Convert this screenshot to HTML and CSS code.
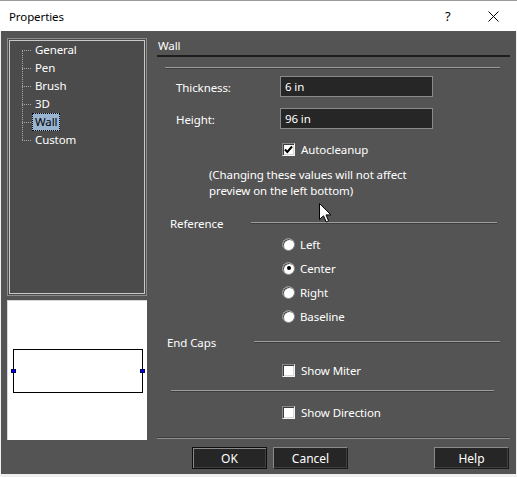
FILE: index.html
```html
<!DOCTYPE html>
<html lang="en">
<head>
    <meta charset="UTF-8">
    <meta name="viewport" content="width=device-width, initial-scale=1.0">
    <title>Properties</title>
    <link rel="stylesheet" href="styles.css">
</head>
<body>
<div class="window">
    <!-- Title bar -->
    <div class="titlebar">
        <span class="title">Properties</span>
        <span class="title-help">?</span>
        <span class="title-close">
            <svg width="11" height="11" viewBox="0 0 11 11"><path d="M0.5 0.5L10.5 10.5M10.5 0.5L0.5 10.5" stroke="#000" stroke-width="1" fill="none"/></svg>
        </span>
    </div>

    <div class="dialog">
        <!-- Left: page tree + preview -->
        <aside class="side">
            <div class="tree-box">
                <ul class="tree">
                    <li><span>General</span></li>
                    <li><span>Pen</span></li>
                    <li><span>Brush</span></li>
                    <li><span>3D</span></li>
                    <li><span class="selected">Wall</span></li>
                    <li><span>Custom</span></li>
                </ul>
            </div>
            <div class="preview">
                <div class="wall-shape">
                    <span class="handle handle-left"></span>
                    <span class="handle handle-right"></span>
                </div>
            </div>
        </aside>

        <!-- Right: Wall page -->
        <main class="page">
            <div class="page-title">Wall</div>
            <div class="groove top-groove"></div>

            <div class="field-row first">
                <label class="field-label">Thickness:</label>
                <div class="field">6 in</div>
            </div>
            <div class="field-row">
                <label class="field-label">Height:</label>
                <div class="field">96 in</div>
            </div>

            <div class="check-row autocleanup">
                <span class="checkbox checked">
                    <svg width="9" height="9" viewBox="0 0 9 9"><path d="M1 4.5L3.3 7L8 1.5" stroke="#000" stroke-width="2" fill="none"/></svg>
                </span>
                <span>Autocleanup</span>
            </div>

            <p class="note">(Changing these values will not affect<br>preview on the left bottom)</p>

            <div class="group-head reference">
                <span class="group-label">Reference</span>
                <span class="groove"></span>
            </div>
            <div class="radios">
                <div class="radio-row"><span class="radio"></span><span>Left</span></div>
                <div class="radio-row"><span class="radio on"></span><span>Center</span></div>
                <div class="radio-row"><span class="radio"></span><span>Right</span></div>
                <div class="radio-row"><span class="radio"></span><span>Baseline</span></div>
            </div>

            <div class="group-head endcaps">
                <span class="group-label">End Caps</span>
                <span class="groove"></span>
            </div>
            <div class="check-row miter">
                <span class="checkbox"></span>
                <span>Show Miter</span>
            </div>
            <div class="groove mid-groove"></div>
            <div class="check-row direction">
                <span class="checkbox"></span>
                <span>Show Direction</span>
            </div>

            <div class="bottom-line"></div>
            <div class="buttons">
                <button class="btn default">OK</button>
                <button class="btn">Cancel</button>
                <button class="btn help">Help</button>
            </div>
        </main>

        <!-- mouse pointer -->
        <svg class="pointer" width="13" height="20" viewBox="0 0 13 20">
            <path d="M0.5 0.5L0.5 16.5L4.5 12.8L7.2 18.9L9.6 17.9L7 11.9L12 11.9Z" fill="#fff" stroke="#000" stroke-width="1"/>
        </svg>
    </div>
</div>
</body>
</html>
```

FILE: styles.css
```css
* {
    box-sizing: border-box;
    margin: 0;
    padding: 0;
}

body {
    width: 517px;
    height: 477px;
    background: #f0f0f0;
    font-family: 'Segoe UI', 'Noto Sans', sans-serif;
    font-size: 11.5px;
    letter-spacing: -0.1px;
    color: #fff;
    overflow: hidden;
}

.window {
    width: 517px;
    height: 477px;
    background: #f0f0f0;
}

/* Title bar */
.titlebar {
    height: 31px;
    background: #fff;
    color: #000;
    display: flex;
    align-items: center;
    border-top: 1px solid #9a9a9a;
}

.title {
    margin-left: 9px;
    flex: 1;
}

.title-help {
    width: 12px;
    margin-right: 31px;
    font-size: 13px;
}

.title-close {
    display: flex;
    margin-right: 18px;
}

/* Dialog body */
.dialog {
    position: relative;
    display: flex;
    gap: 10px;
    height: 443px;
    margin: 0 1px;
    padding: 7px 6px 0 6px;
    background: #545454;
}

.side {
    width: 140px;
    display: flex;
    flex-direction: column;
    gap: 4px;
}

.tree-box {
    height: 258px;
    border: 1px solid #8c8c8c;
    padding: 1px;
    background: #4b4b4b;
}

.tree {
    position: relative;
    list-style: none;
    height: 100%;
    border: 1px solid #c8c8c8;
}

/* vertical connector */
.tree::before {
    content: '';
    position: absolute;
    left: 12px;
    top: 9px;
    height: 90px;
    border-left: 1px dotted #a8a8a8;
}

.tree li {
    height: 18px;
    display: flex;
    align-items: center;
    padding-left: 12px;
}

.tree li::before {
    content: '';
    width: 9px;
    border-top: 1px dotted #a8a8a8;
    margin-right: 1px;
}

.tree li span {
    padding: 0 2px;
    line-height: 16px;
    border: 1px solid transparent;
}

.tree li .selected {
    background: #99b4d1;
    color: #000;
    border: 1px dotted #000;
}

.preview {
    height: 140px;
    background: #fff;
    border-top: 1px solid #d8d8d8;
    border-left: 1px solid #d8d8d8;
    padding: 48px 0 0 5px;
}

.wall-shape {
    position: relative;
    width: 130px;
    height: 44px;
    border: 1px solid #000;
}

.handle {
    position: absolute;
    top: 19px;
    width: 5px;
    height: 4px;
    background: #0000ff;
    border: 1px solid #000050;
}

.handle-left { left: -3px; }
.handle-right { right: -3px; }

/* Page */
.page {
    flex: 1;
    display: flex;
    flex-direction: column;
}

.page-title {
    line-height: 16px;
    padding: 0 0 1px 1px;
    border-bottom: 2px solid #1e1e1e;
}

.groove {
    height: 2px;
    border-top: 1px solid #9c9c9c;
    border-bottom: 1px solid #3e3e3e;
}

.top-groove {
    margin: 10px 10px 0 8px;
}

.field-row {
    display: flex;
    align-items: center;
    margin-top: 11px;
    padding-left: 19px;
}

.field-row.first {
    margin-top: 7px;
}

.field-label {
    width: 104px;
    padding-top: 2px;
}

.field {
    width: 153px;
    height: 21px;
    background: #262626;
    border: 1px solid #8a8a8a;
    padding-left: 4px;
    line-height: 19px;
}

.check-row {
    display: flex;
    align-items: center;
    gap: 6px;
    height: 16px;
    padding-left: 125px;
}

.autocleanup {
    margin-top: 12px;
}

.checkbox {
    width: 13px;
    height: 13px;
    background: #fff;
    border: 1px solid;
    border-color: #8a8a8a #f4f4f4 #f4f4f4 #8a8a8a;
    box-shadow: inset 1px 1px 0 #3c3c3c, inset -1px -1px 0 #d8d8d8;
    display: flex;
    align-items: center;
    justify-content: center;
}

.note {
    margin-top: 10px;
    padding-left: 52px;
    line-height: 16px;
}

.group-head {
    display: flex;
    align-items: center;
    height: 16px;
}

.group-head .groove {
    flex: 1;
}

.reference {
    margin-top: 16px;
    padding-left: 13px;
    margin-right: 13px;
}

.reference .group-label {
    width: 81px;
}

.radios {
    margin-top: 1px;
}

.radio-row {
    height: 24px;
    display: flex;
    align-items: center;
    gap: 5px;
    padding-left: 125px;
}

.radio {
    width: 13px;
    height: 13px;
    border-radius: 50%;
    background: #fff;
    border: 1px solid #8a8a8a;
    box-shadow: inset 1px 1px 0 #505050;
    display: flex;
    align-items: center;
    justify-content: center;
}

.radio.on::after {
    content: '';
    width: 4px;
    height: 4px;
    border-radius: 50%;
    background: #000;
}

.endcaps {
    margin-top: 6px;
    padding-left: 10px;
    margin-right: 10px;
}

.endcaps .group-label {
    width: 87px;
}

.miter {
    margin-top: 12px;
}

.mid-groove {
    margin: 12px 16px 0 14px;
}

.direction {
    margin-top: 12px;
}

.bottom-line {
    margin-top: 17px;
    height: 2px;
    border-top: 1px solid #3e3e3e;
    border-bottom: 1px solid #8c8c8c;
}

.buttons {
    display: flex;
    gap: 6px;
    margin-top: 8px;
    padding-left: 35px;
    padding-right: 1px;
}

.btn {
    width: 75px;
    height: 22px;
    background: #262626;
    color: #fff;
    font-family: inherit;
    font-size: 12px;
    border: 1px solid;
    border-color: #8a8a8a #1a1a1a #1a1a1a #8a8a8a;
    box-shadow: inset -1px -1px 0 #404040;
}

.btn.default {
    border: 1px solid #0e0e0e;
    box-shadow: inset 1px 1px 0 #8a8a8a, inset -1px -1px 0 #404040;
}

.btn.help {
    margin-left: auto;
}

.pointer {
    position: absolute;
    left: 318px;
    top: 172px;
}
```
